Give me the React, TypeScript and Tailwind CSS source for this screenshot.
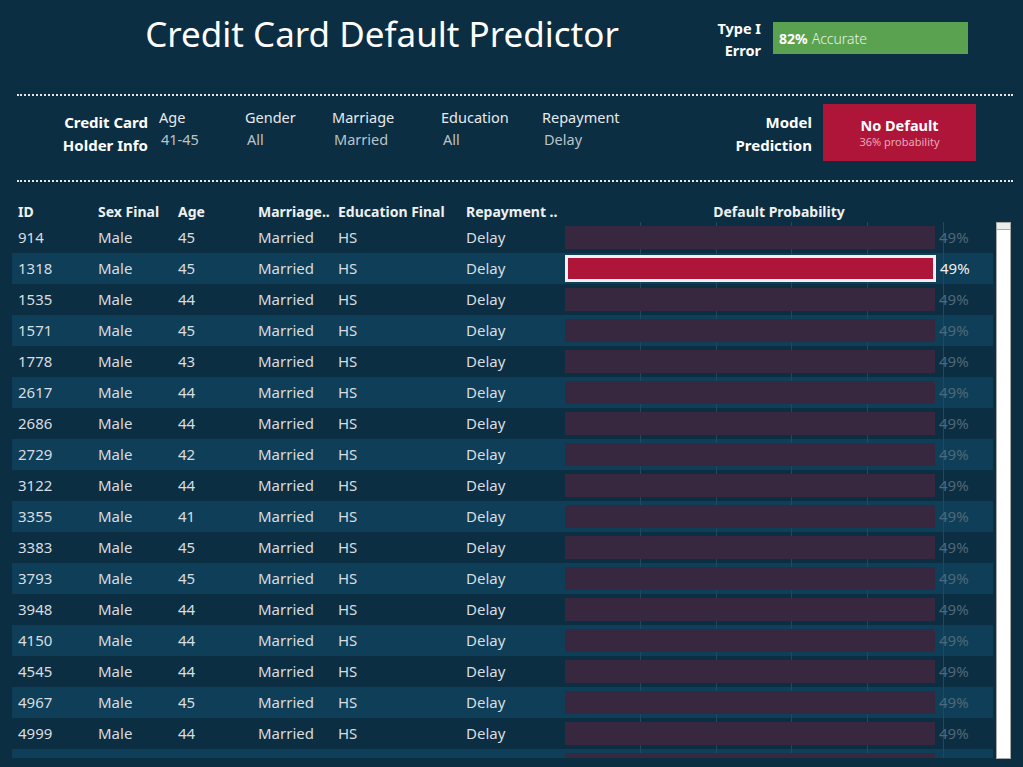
const rows: { id: number; age: number }[] = [
  { id: 914, age: 45 },
  { id: 1318, age: 45 },
  { id: 1535, age: 44 },
  { id: 1571, age: 45 },
  { id: 1778, age: 43 },
  { id: 2617, age: 44 },
  { id: 2686, age: 44 },
  { id: 2729, age: 42 },
  { id: 3122, age: 44 },
  { id: 3355, age: 41 },
  { id: 3383, age: 45 },
  { id: 3793, age: 45 },
  { id: 3948, age: 44 },
  { id: 4150, age: 44 },
  { id: 4545, age: 44 },
  { id: 4967, age: 45 },
  { id: 4999, age: 44 },
  { id: 5008, age: 44 },
];

const filtros = [
  { label: "Age", value: "41-45", w: "w-[86px]" },
  { label: "Gender", value: "All", w: "w-[87px]" },
  { label: "Marriage", value: "Married", w: "w-[109px]" },
  { label: "Education", value: "All", w: "w-[101px]" },
  { label: "Repayment", value: "Delay", w: "w-[100px]" },
];

const gridLines = [75, 151, 226, 302, 378];

function Row({ r, i }: { r: { id: number; age: number }; i: number }) {
  const selected = r.id === 1318;
  return (
    <div
      className={`flex h-[31px] shrink-0 items-center text-[15px] text-[#d7dde0] ${
        i % 2 === 1 ? "bg-[#0f3f58]" : ""
      }`}
    >
      <div className="w-[80px] pl-[6px]">{r.id}</div>
      <div className="w-[80px] pl-[6px]">Male</div>
      <div className="w-[80px] pl-[6px]">{r.age}</div>
      <div className="w-[80px] pl-[6px]">Married</div>
      <div className="w-[128px] pl-[6px]">HS</div>
      <div className="w-[105px] pl-[6px]">Delay</div>
      <div className="relative flex h-full w-[428px] items-center">
        {gridLines.map((x) => (
          <div
            key={x}
            className="absolute top-0 h-full w-px bg-[#1d4a62]"
            style={{ left: x }}
          />
        ))}
        {selected ? (
          <div className="relative h-[27px] w-[371px] border-[3px] border-[#f2f2f2] bg-[#af1439]" />
        ) : (
          <div className="relative h-[23px] w-[370px] bg-[#38283f]" />
        )}
        <span
          className={`relative ml-[4px] ${
            selected ? "text-[#f0f0f0]" : "text-[#4f6877]"
          }`}
        >
          49%
        </span>
      </div>
    </div>
  );
}

export default function App() {
  return (
    <div
      className="flex h-[767px] w-[1023px] flex-col overflow-hidden bg-[#0c2e42] text-white"
      style={{ fontFamily: '"Noto Sans", "Open Sans", sans-serif' }}
    >
      {/* encabezado */}
      <div className="flex h-[94px] shrink-0">
        <div className="w-[700px] pl-[64px] pt-[12px] text-center">
          <h1 className="text-[35px] leading-[44px] text-white">
            Credit Card Default Predictor
          </h1>
        </div>
        <div className="ml-[16px] flex pt-[17px]">
          <div className="w-[45px] whitespace-nowrap text-right text-[14.5px] font-bold leading-[22px]">
            <p>Type I</p>
            <p>Error</p>
          </div>
          <div className="ml-[12px] mt-[5px] flex h-[32px] w-[195px] items-center bg-[#5aa250] pl-[6px] text-[14px]">
            <span className="font-bold">82%</span>
            <span className="ml-[4px] font-light text-[#e8f2e6]">Accurate</span>
          </div>
        </div>
      </div>

      <div className="ml-[17px] mr-[10px] border-t-2 border-dotted border-[#e6e6e6]" />

      {/* filtros */}
      <div className="flex h-[84px] shrink-0 items-start">
        <div className="ml-[58px] mt-[15px] w-[90px] whitespace-nowrap text-right text-[15px] font-bold leading-[23px]">
          <p>Credit Card</p>
          <p>Holder Info</p>
        </div>
        <div className="ml-[11px] mt-[10px] flex">
          {filtros.map((f) => (
            <div key={f.label} className={`${f.w} text-[14.5px] leading-[22px]`}>
              <p className="text-[#e6eaec]">{f.label}</p>
              <p className="pl-[2px] text-[#b9c4ca]">{f.value}</p>
            </div>
          ))}
        </div>
        <div className="flex-1" />
        <div className="mt-[15px] text-right text-[15px] font-bold leading-[23px]">
          <p>Model</p>
          <p>Prediction</p>
        </div>
        <div className="ml-[11px] mr-[47px] mt-[8px] flex h-[57px] w-[153px] flex-col items-center justify-center bg-[#af1439]">
          <span className="text-[14.5px] font-bold leading-[18px]">No Default</span>
          <span className="text-[11px] leading-[15px] text-[#e7a9b8]">
            36% probability
          </span>
        </div>
      </div>

      <div className="ml-[17px] mr-[10px] border-t-2 border-dotted border-[#e6e6e6]" />

      {/* tabla */}
      <div className="mt-[19px] flex min-h-0 flex-1">
        <div className="ml-[12px] flex min-h-0 w-[981px] flex-col">
          <div className="flex h-[21px] shrink-0 items-center text-[14px] font-bold text-[#eef1f2]">
            <div className="w-[80px] pl-[6px]">ID</div>
            <div className="w-[80px] pl-[6px]">Sex Final</div>
            <div className="w-[80px] pl-[6px]">Age</div>
            <div className="w-[80px] pl-[6px]">Marriage..</div>
            <div className="w-[128px] pl-[6px]">Education Final</div>
            <div className="w-[105px] pl-[6px]">Repayment ..</div>
            <div className="w-[428px] text-center">Default Probability</div>
          </div>
          <div className="flex h-[536px] flex-col overflow-hidden">
            {rows.map((r, i) => (
              <Row key={r.id} r={r} i={i} />
            ))}
          </div>
        </div>
        <div className="ml-[3px] mt-[21px] flex h-[537px] w-[15px] flex-col border border-[#a9a9a9] bg-white">
          <div className="h-[7px] border-b border-[#a9a9a9] bg-[#ececec]" />
        </div>
      </div>
    </div>
  );
}
